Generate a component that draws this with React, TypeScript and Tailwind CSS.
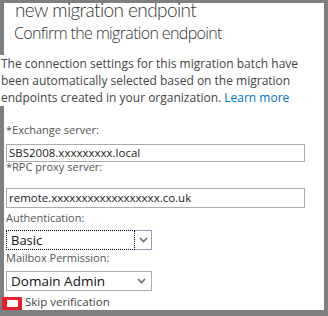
import React from "react";

const Chevron = () => (
  <svg width="9" height="6" viewBox="0 0 9 6" className="block">
    <polyline points="1,1 4.5,4.5 8,1" fill="none" stroke="#6b6b6b" strokeWidth="1.6" />
  </svg>
);

export default function App() {
  const font = { fontFamily: '"Open Sans", "Noto Sans", sans-serif' };
  return (
    <div className="w-[328px] h-[316px] bg-[#7f7f7f] pt-[3px] pl-[4px] pr-[4px] pb-[6px] overflow-hidden" style={font}>
      <div className="h-full bg-white flex flex-col">
        <div
          className="h-[20px] leading-[13px] overflow-hidden pl-[11px] text-[19px] font-light tracking-[-0.6px] text-[#333]"
          style={{ fontFamily: 'Lato, "Open Sans", sans-serif' }}
        >
          new migration endpoint
        </div>
        <div className="mt-[3px] leading-[20px] pl-[10px] text-[16px] font-light tracking-[-0.65px] text-[#333]">
          Confirm the migration endpoint
        </div>
        <div className="mt-[12px] -ml-[4px] pl-[1px] bg-white text-[12px] leading-[17px] text-[#444]">
          <div>The connection settings for this migration batch have</div>
          <div>been automatically selected based on the migration</div>
          <div>
            endpoints created in your organization. <span className="text-[#0072c6]">Learn more</span>
          </div>
        </div>
        <div className="pl-[2px] flex flex-col">
          <div className="mt-[16px] leading-[16px] text-[11px] text-[#555]">*Exchange server:</div>
          <div className="mt-[6px] w-[299px] h-[18px] border border-[#ababab] flex items-center pl-[2px] leading-[16px] text-[11.5px] text-[#222]">
            SBS2008.xxxxxxxxx.local
          </div>
          <div className="-mt-[3px] leading-[16px] text-[11px] text-[#555]">*RPC proxy server:</div>
          <div className="mt-[13px] w-[299px] h-[20px] border border-[#ababab] flex items-center pl-[2px] leading-[16px] text-[11.5px] text-[#222]">
            remote.xxxxxxxxxxxxxxxxxx.co.uk
          </div>
          <div className="mt-[2px] leading-[16px] text-[11px] text-[#555]">Authentication:</div>
          <div className="mt-[4px] w-[146px] h-[20px] flex">
            <div className="flex-1 border border-dotted border-black flex items-center pl-[4px] leading-[16px] text-[13px] text-[#111]">
              Basic
            </div>
            <div className="w-[17px] border-y border-r border-[#8aa0b8] flex items-center justify-center">
              <Chevron />
            </div>
          </div>
          <div className="mt-0 leading-[16px] text-[11px] text-[#555]">Mailbox Permission:</div>
          <div className="mt-[5px] w-[146px] h-[20px] border border-[#ababab] flex items-center justify-between pl-[4px] pr-[5px] leading-[16px] text-[13.5px] text-[#111]">
            <span>Domain Admin</span>
            <Chevron />
          </div>
          <div className="mt-[3px] h-[16px] flex items-start leading-[16px] text-[11.5px] text-[#444]">
            <div className="-ml-[4px] mt-[3px] w-[20px] h-[13px] bg-[#e5212b] flex items-center justify-center shrink-0">
              <div className="w-[11px] h-[7px] bg-white" />
            </div>
            <span className="ml-[3px]">Skip verification</span>
          </div>
        </div>
      </div>
    </div>
  );
}
